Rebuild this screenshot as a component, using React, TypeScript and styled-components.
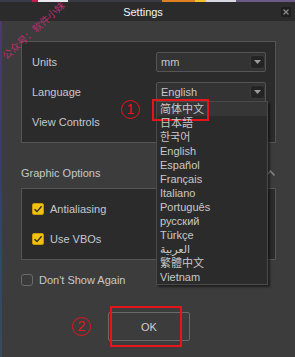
import React from 'react';
import styled, { createGlobalStyle } from 'styled-components';

const GlobalStyle = createGlobalStyle`
  html, body {
    margin: 0;
    padding: 0;
    background: #3c3c3c;
  }
  body {
    font-family: 'Liberation Sans', 'Noto Sans CJK SC', 'DejaVu Sans', sans-serif;
  }
`;

const Screen = styled.div`
  position: relative;
  width: 295px;
  height: 357px;
  overflow: hidden;
  display: flex;
  flex-direction: column;
  background: #3c3c3c;
`;

// a sliver of the window behind the dialog
const BehindStrip = styled.div`
  height: 2px;
  background: linear-gradient(
    90deg,
    #3a3b48 0 11%,
    #c02050 11% 13%,
    #e8e8ec 13% 23%,
    #3a3a44 23% 55%,
    #e08020 55% 66%,
    #f0c030 66% 70%,
    #d8d8e0 70% 80%,
    #6a5a86 80% 100%
  );
`;

const TitleBar = styled.div`
  height: 19px;
  background: #2b2b2b;
  display: grid;
  grid-template-columns: 1fr auto 1fr;
  align-items: center;
`;

const Title = styled.div`
  grid-column: 2;
  margin-right: 9px;
  color: #f4f4f4;
  font-size: 11px;
`;

const CloseButton = styled.div`
  grid-column: 3;
  justify-self: end;
  margin-right: 4px;
  width: 10px;
  height: 10px;
  background: #1e1e1e;
  display: flex;
  align-items: center;
  justify-content: center;
`;

const BodyRow = styled.div`
  flex: 1;
  display: flex;
`;

const SideStrip = styled.div`
  width: 2px;
  background: linear-gradient(180deg, #4b3a6e, #3a3a70 40%, #2c4a6a 70%, #3a4a5a);
`;

const Body = styled.div`
  position: relative;
  flex: 1;
  padding: 20px 19px 0 19px;
  display: flex;
  flex-direction: column;
`;

const Panel = styled.div<{ $cols?: string }>`
  background: #2b2b2b;
  border: 1px solid #555;
  padding: 10px 9px 10px 10px;
  display: grid;
  grid-template-columns: ${(p) => p.$cols || '1fr'};
  grid-auto-rows: 20px;
  row-gap: 10px;
  align-items: center;
`;

const Label = styled.div`
  color: #c6c8cc;
  font-size: 11px;
`;

const Select = styled.div`
  position: relative;
  height: 20px;
  box-sizing: border-box;
  background: #333;
  border: 1px solid #555;
  border-radius: 2px;
  padding-left: 4px;
  display: flex;
  align-items: center;
  justify-content: space-between;
  color: #c8c8c8;
  font-size: 11px;
`;

const ArrowButton = styled.div`
  width: 15px;
  height: 14px;
  box-sizing: border-box;
  background: #242424;
  border: 1px solid #3a3a3a;
  border-radius: 3px;
  display: flex;
  align-items: center;
  justify-content: center;
`;

const List = styled.div`
  position: absolute;
  z-index: 5;
  left: -1px;
  top: 18px;
  width: 110px;
  background: #2b2b2b;
  border: 1px solid #4a4a4a;
  box-shadow: 2px 2px 2px rgba(0, 0, 0, 0.5);
`;

const ListItem = styled.div<{ $active?: boolean }>`
  position: relative;
  height: 14px;
  line-height: 14px;
  padding-left: 3px;
  font-size: 11px;
  color: #c8c8c8;
  background: ${(p) => (p.$active ? '#363636' : 'transparent')};
  white-space: nowrap;
`;

const RedBox = styled.div<{ $w: number; $h: number; $l: number; $t: number }>`
  position: absolute;
  left: ${(p) => p.$l}px;
  top: ${(p) => p.$t}px;
  width: ${(p) => p.$w}px;
  height: ${(p) => p.$h}px;
  box-sizing: border-box;
  border: 2px solid #e8141c;
  pointer-events: none;
`;

const Marker = styled.div<{ $l: number; $t: number }>`
  position: absolute;
  left: ${(p) => p.$l}px;
  top: ${(p) => p.$t}px;
  width: 19px;
  height: 19px;
  box-sizing: border-box;
  border: 1.5px solid #e8141c;
  border-radius: 50%;
  color: #e8141c;
  font-size: 14px;
  line-height: 16px;
  text-align: center;
`;

const SectionHeader = styled.div`
  margin-top: 20px;
  margin-bottom: 5px;
  height: 20px;
  display: flex;
  align-items: center;
  justify-content: space-between;
  padding-right: 1px;
`;

const CheckRow = styled.div<{ $top?: number }>`
  margin-top: ${(p) => p.$top || 0}px;
  height: 20px;
  display: flex;
  align-items: center;
  gap: 6px;
`;

const Box = styled.div<{ $checked?: boolean }>`
  width: 12px;
  height: 12px;
  box-sizing: border-box;
  border-radius: ${(p) => (p.$checked ? 2 : 3)}px;
  border: 1px solid ${(p) => (p.$checked ? '#c89a00' : '#6a6a6a')};
  background: ${(p) => (p.$checked ? '#f2c210' : '#3a3a3a')};
  display: flex;
  align-items: center;
  justify-content: center;
`;

const Footer = styled.div`
  margin-top: 22px;
  display: flex;
  justify-content: center;
`;

const ButtonWrap = styled.div`
  position: relative;
  margin-left: 1px;
`;

const OkButton = styled.div`
  width: 82px;
  height: 29px;
  box-sizing: border-box;
  border: 1px solid #6a6a6a;
  border-radius: 2px;
  background: #3c3c3c;
  color: #d0d0d0;
  font-size: 11px;
  display: flex;
  align-items: center;
  justify-content: center;
`;

const Watermark = styled.div`
  position: absolute;
  left: -6px;
  top: 25px;
  width: 80px;
  text-align: center;
  color: #b8306e;
  font-size: 10px;
  line-height: 12px;
  transform: rotate(-42deg);
  white-space: nowrap;
  pointer-events: none;
  z-index: 10;
`;

const languages = [
  '简体中文',
  '日本語',
  '한국어',
  'English',
  'Español',
  'Français',
  'Italiano',
  'Português',
  'русский',
  'Türkçe',
  'العربية',
  '繁體中文',
  'Vietnam',
];

const DownArrow = () => (
  <svg width="7" height="4" viewBox="0 0 7 4">
    <path d="M0 0 H7 L3.5 4 Z" fill="#9a9a9a" />
  </svg>
);

const Check = ({ checked }: { checked?: boolean }) => (
  <Box $checked={checked}>
    {checked && (
      <svg width="10" height="10" viewBox="0 0 10 10">
        <path d="M1.5 5.2 L4 7.6 L8.6 2.2" fill="none" stroke="#2e2e2e" strokeWidth="1.4" />
      </svg>
    )}
  </Box>
);

const App: React.FC = () => {
  return (
    <Screen>
      <GlobalStyle />
      <BehindStrip />
      <TitleBar>
        <Title>Settings</Title>
        <CloseButton>
          <svg width="6" height="6" viewBox="0 0 6 6">
            <path d="M0.5 0.5 L5.5 5.5 M5.5 0.5 L0.5 5.5" stroke="#8a8a8a" strokeWidth="1.3" />
          </svg>
        </CloseButton>
      </TitleBar>
      <BodyRow>
        <SideStrip />
        <Body>
          <Panel $cols="1fr 110px">
            <Label>Units</Label>
            <Select>
              mm
              <ArrowButton>
                <DownArrow />
              </ArrowButton>
            </Select>
            <Label>Language</Label>
            <Select>
              English
              <ArrowButton>
                <DownArrow />
              </ArrowButton>
              <List>
                <Marker $l={-36} $t={-2}>1</Marker>
                {languages.map((lang, i) => (
                  <ListItem key={lang} $active={i === 0}>
                    {lang}
                    {i === 0 && <RedBox $l={-5} $t={-3} $w={57} $h={22} />}
                  </ListItem>
                ))}
              </List>
            </Select>
            <Label>View Controls</Label>
          </Panel>

          <SectionHeader>
            <Label>Graphic Options</Label>
            <svg width="9" height="6" viewBox="0 0 9 6">
              <path d="M0.5 5.5 L4.5 1 L8.5 5.5" fill="none" stroke="#8a8a8a" strokeWidth="1.4" />
            </svg>
          </SectionHeader>

          <Panel>
            <CheckRow>
              <Check checked />
              <Label>Antialiasing</Label>
            </CheckRow>
            <CheckRow>
              <Check checked />
              <Label>Use VBOs</Label>
            </CheckRow>
          </Panel>

          <CheckRow $top={10}>
            <Check />
            <Label>Don't Show Again</Label>
          </CheckRow>

          <Footer>
            <ButtonWrap>
              <Marker $l={-36} $t={5}>2</Marker>
              <OkButton>OK</OkButton>
              <RedBox $l={2} $t={-6} $w={72} $h={41} />
            </ButtonWrap>
          </Footer>
        </Body>
      </BodyRow>
      <Watermark>公众号：软件小妹</Watermark>
    </Screen>
  );
};

export default App;
